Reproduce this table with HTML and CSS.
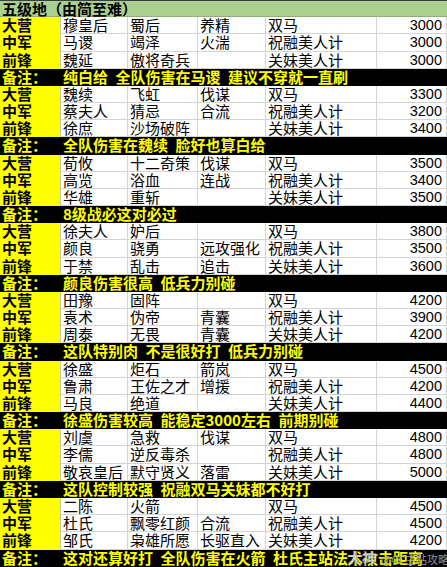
FILE: index.html
```html
<!DOCTYPE html>
<html lang="zh">
<head>
<meta charset="utf-8">
<title>五级地（由简至难）</title>
<link rel="stylesheet" href="styles.css">
</head>
<body>
<div class="sheet">
  <div class="hd">五级地（由简至难）</div>

  <div class="c lab">大营</div><div class="c">穆皇后</div><div class="c">蜀后</div><div class="c">养精</div><div class="c">双马</div><div class="c num">3000</div>
  <div class="c lab">中军</div><div class="c">马谡</div><div class="c">竭泽</div><div class="c">火湍</div><div class="c">祝融美人计</div><div class="c num">3000</div>
  <div class="c lab">前锋</div><div class="c">魏延</div><div class="c">傲将奇兵</div><div class="c"></div><div class="c">关妹美人计</div><div class="c num">3000</div>
  <div class="nl">备注：</div><div class="nt">纯白给&ensp;全队伤害在马谡&ensp;建议不穿就一直刷</div>

  <div class="c lab">大营</div><div class="c">魏续</div><div class="c">飞虹</div><div class="c">伐谋</div><div class="c">双马</div><div class="c num">3300</div>
  <div class="c lab">中军</div><div class="c">蔡夫人</div><div class="c">猜忌</div><div class="c">合流</div><div class="c">祝融美人计</div><div class="c num">3200</div>
  <div class="c lab">前锋</div><div class="c">徐庶</div><div class="c">沙场破阵</div><div class="c"></div><div class="c">关妹美人计</div><div class="c num">3400</div>
  <div class="nl">备注：</div><div class="nt">全队伤害在魏续&ensp;脸好也算白给</div>

  <div class="c lab">大营</div><div class="c">荀攸</div><div class="c">十二奇策</div><div class="c">伐谋</div><div class="c">双马</div><div class="c num">3500</div>
  <div class="c lab">中军</div><div class="c">高览</div><div class="c">浴血</div><div class="c">连战</div><div class="c">祝融美人计</div><div class="c num">3400</div>
  <div class="c lab">前锋</div><div class="c">华雄</div><div class="c">重斩</div><div class="c"></div><div class="c">关妹美人计</div><div class="c num">3500</div>
  <div class="nl">备注：</div><div class="nt">8级战必这对必过</div>

  <div class="c lab">大营</div><div class="c">徐夫人</div><div class="c">妒后</div><div class="c"></div><div class="c">双马</div><div class="c num">3800</div>
  <div class="c lab">中军</div><div class="c">颜良</div><div class="c">骁勇</div><div class="c">远攻强化</div><div class="c">祝融美人计</div><div class="c num">3500</div>
  <div class="c lab">前锋</div><div class="c">于禁</div><div class="c">乱击</div><div class="c">追击</div><div class="c">关妹美人计</div><div class="c num">3600</div>
  <div class="nl">备注：</div><div class="nt">颜良伤害很高&ensp;低兵力别碰</div>

  <div class="c lab">大营</div><div class="c">田豫</div><div class="c">固阵</div><div class="c"></div><div class="c">双马</div><div class="c num">4200</div>
  <div class="c lab">中军</div><div class="c">袁术</div><div class="c">伪帝</div><div class="c">青囊</div><div class="c">祝融美人计</div><div class="c num">3900</div>
  <div class="c lab">前锋</div><div class="c">周泰</div><div class="c">无畏</div><div class="c">青囊</div><div class="c">关妹美人计</div><div class="c num">4200</div>
  <div class="nl">备注：</div><div class="nt">这队特别肉&ensp;不是很好打&ensp;低兵力别碰</div>

  <div class="c lab">大营</div><div class="c">徐盛</div><div class="c">炬石</div><div class="c">箭岚</div><div class="c">双马</div><div class="c num">4500</div>
  <div class="c lab">中军</div><div class="c">鲁肃</div><div class="c">王佐之才</div><div class="c">增援</div><div class="c">祝融美人计</div><div class="c num">4200</div>
  <div class="c lab">前锋</div><div class="c">马良</div><div class="c">绝道</div><div class="c"></div><div class="c">关妹美人计</div><div class="c num">4400</div>
  <div class="nl">备注：</div><div class="nt">徐盛伤害较高&ensp;能稳定3000左右&ensp;前期别碰</div>

  <div class="c lab">大营</div><div class="c">刘虞</div><div class="c">急救</div><div class="c">伐谋</div><div class="c">双马</div><div class="c num">4800</div>
  <div class="c lab">中军</div><div class="c">李儒</div><div class="c">逆反毒杀</div><div class="c"></div><div class="c">祝融美人计</div><div class="c num">4800</div>
  <div class="c lab">前锋</div><div class="c">敬哀皇后</div><div class="c">默守贤义</div><div class="c">落雷</div><div class="c">关妹美人计</div><div class="c num">5000</div>
  <div class="nl">备注：</div><div class="nt">这队控制较强&ensp;祝融双马关妹都不好打</div>

  <div class="c lab">大营</div><div class="c">二陈</div><div class="c">火箭</div><div class="c"></div><div class="c">双马</div><div class="c num">4500</div>
  <div class="c lab">中军</div><div class="c">杜氏</div><div class="c">飘零红颜</div><div class="c">合流</div><div class="c">祝融美人计</div><div class="c num">4500</div>
  <div class="c lab">前锋</div><div class="c">邹氏</div><div class="c">枭雄所愿</div><div class="c">长驱直入</div><div class="c">关妹美人计</div><div class="c num">4200</div>
  <div class="nl">备注：</div><div class="nt">这对还算好打&ensp;全队伤害在火箭&ensp;杜氏主站法术攻击距离</div>

  <div class="wm"><span class="wm-big">大神</span><span class="wm-small">@CC主站攻略</span></div>
</div>
</body>
</html>
```

FILE: styles.css
```css
* { box-sizing: border-box; }

html, body {
  margin: 0;
  padding: 0;
  background: #ffffff;
}

body {
  font-family: "Noto Sans CJK SC", "Noto Sans", sans-serif;
  font-size: 15px;
  color: #000000;
}

.sheet {
  position: relative;
  width: 447px;
  height: 567px;
  overflow: hidden;
  display: grid;
  grid-template-columns: 61px 67px 70px 68px 111px 70px;
  grid-auto-rows: 17.18px;
}

.hd {
  grid-column: 1 / -1;
  background: #a9d08e;
  border-top: 1px solid #3c3c3c;
  border-bottom: 1px solid #8fae78;
  padding-left: 2px;
  font-weight: 700;
  line-height: 15px;
  white-space: nowrap;
}

.c {
  border-right: 1px solid #d4d4d4;
  border-bottom: 1px solid #d4d4d4;
  padding-left: 2px;
  line-height: 16px;
  white-space: nowrap;
  overflow: hidden;
  background: #ffffff;
}

.lab {
  background: #ffff00;
  border-bottom: none;
  border-right: 1px solid #c8c8a0;
  font-weight: 700;
  padding-left: 2px;
}

.num {
  text-align: right;
  padding-right: 4px;
  font-family: "Liberation Sans", Arial, sans-serif;
  font-size: 14.5px;
  line-height: 17px;
}

.nl, .nt {
  background: #000000;
  color: #ffff00;
  font-weight: 700;
  line-height: 16px;
  white-space: nowrap;
  overflow: hidden;
}

.nl {
  padding-left: 2px;
}

.nt {
  grid-column: 2 / -1;
  padding-left: 2px;
}

.wm {
  position: absolute;
  left: 347px;
  top: 550px;
  display: flex;
  align-items: baseline;
  gap: 4px;
  color: rgba(235, 235, 235, 0.85);
  white-space: nowrap;
  text-shadow: 0 0 2px rgba(0, 0, 0, 0.8);
}

.wm-big {
  font-size: 15px;
  font-weight: 700;
  line-height: 16px;
}

.wm-small {
  font-size: 11px;
  line-height: 16px;
  color: rgba(200, 200, 200, 0.75);
}
```
